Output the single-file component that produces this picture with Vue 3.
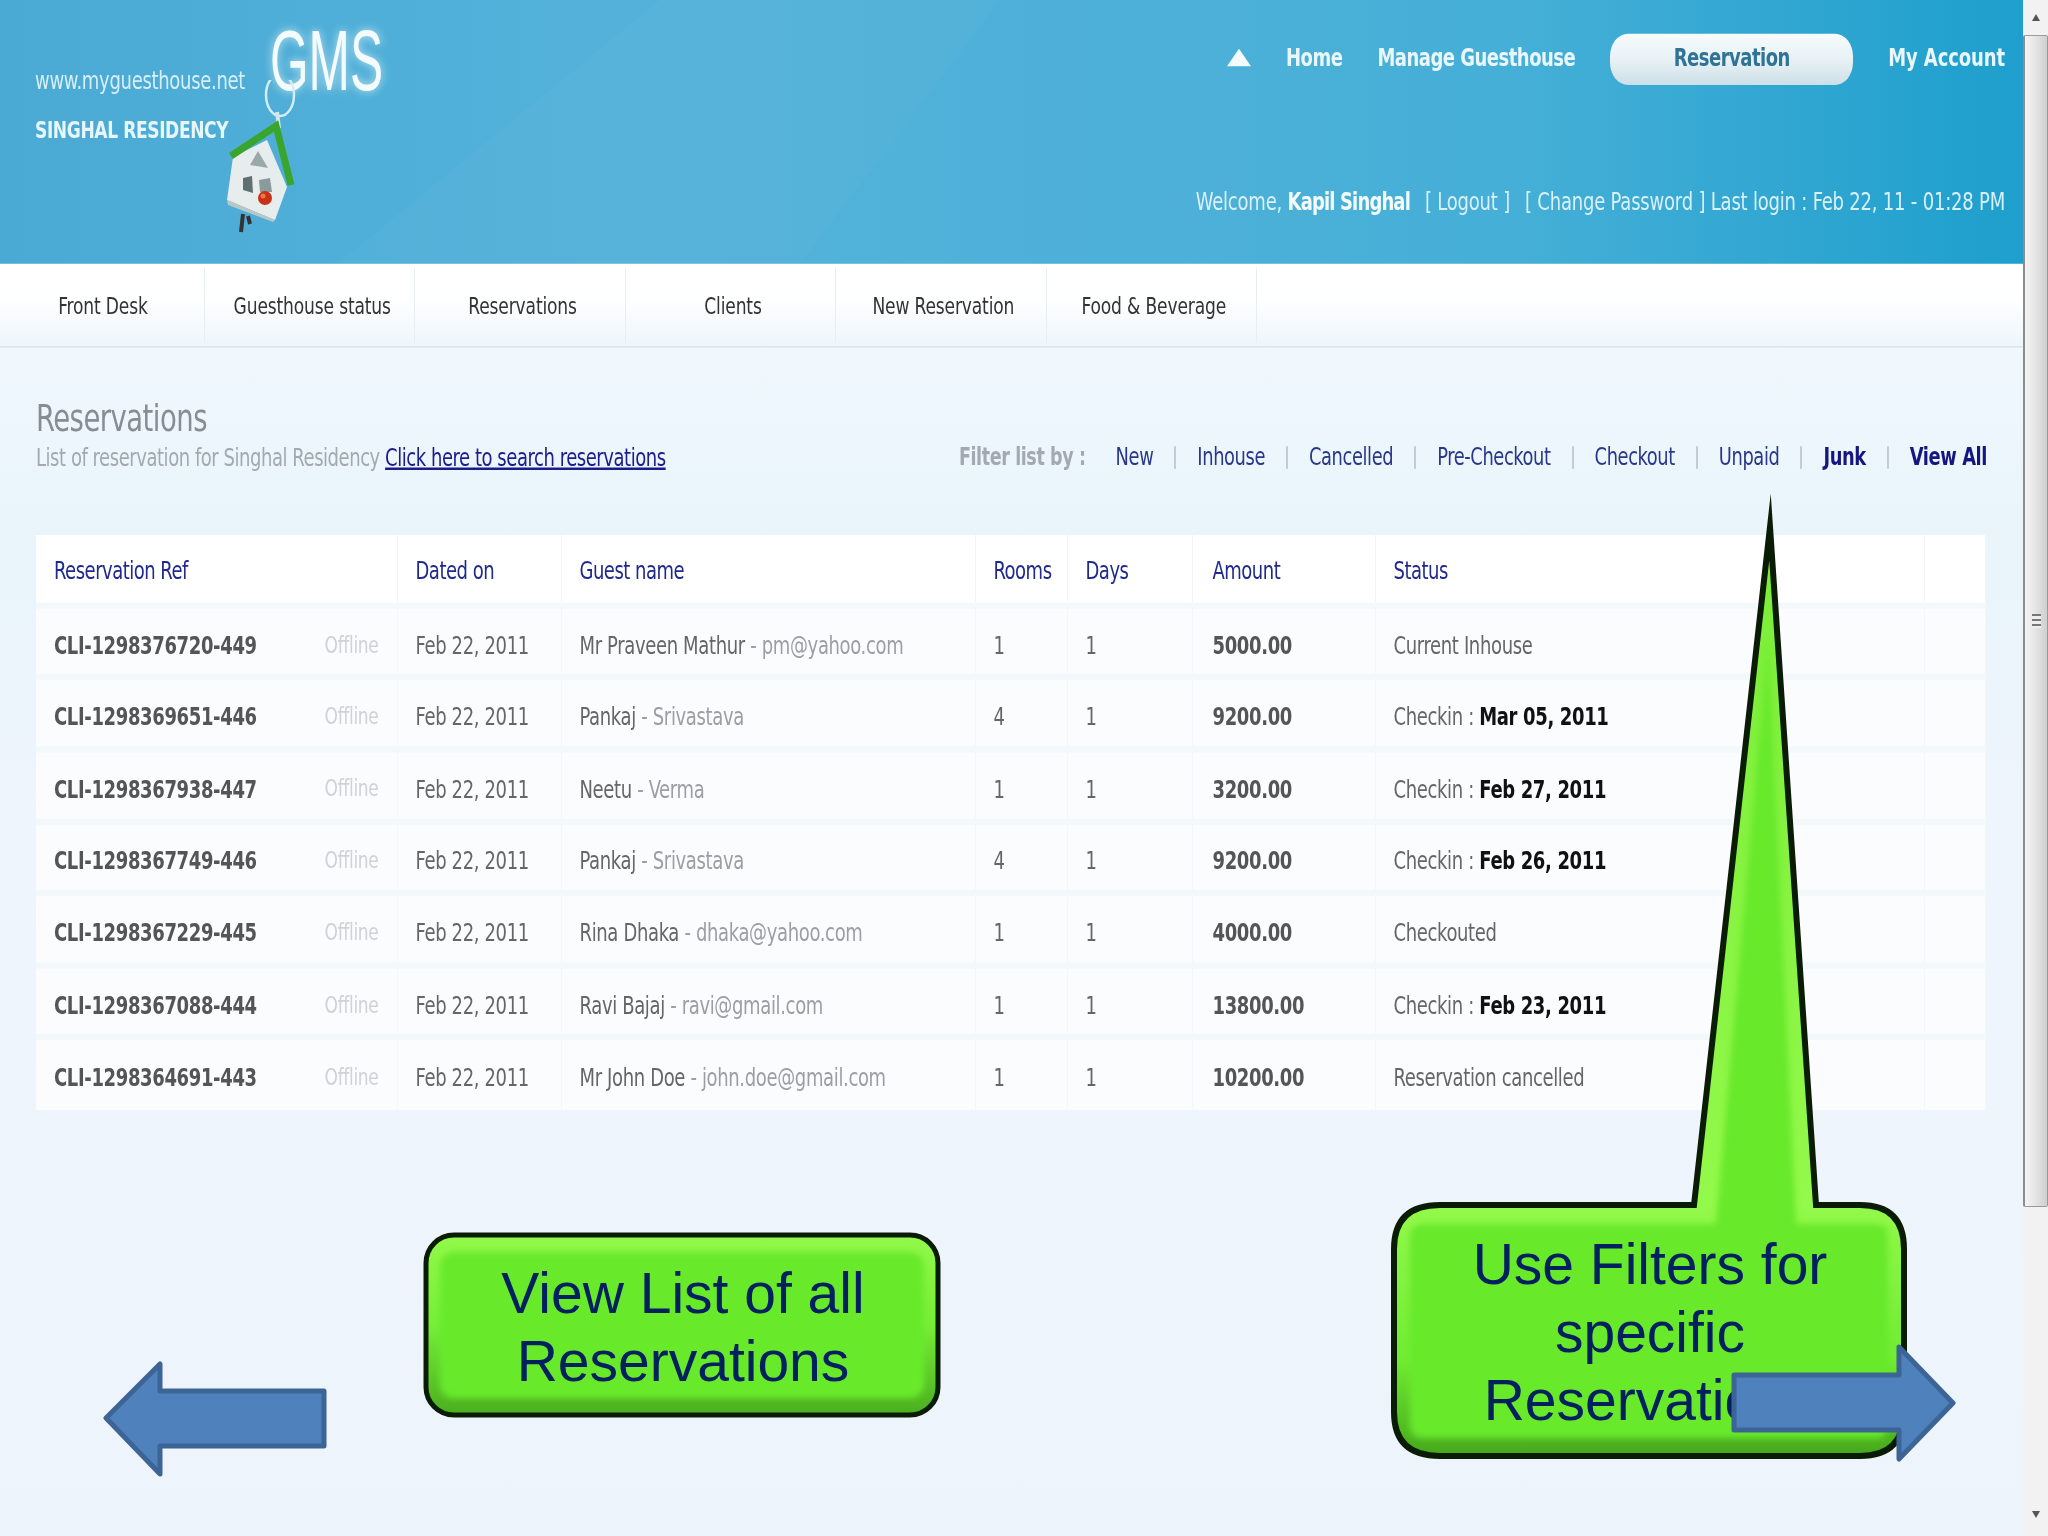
<script setup>
const navItems = ['Front Desk', 'Guesthouse status', 'Reservations', 'Clients', 'New Reservation', 'Food & Beverage']

const filters = [
  { label: 'New' },
  { label: 'Inhouse' },
  { label: 'Cancelled' },
  { label: 'Pre-Checkout' },
  { label: 'Checkout' },
  { label: 'Unpaid' },
  { label: 'Junk', bold: true },
  { label: 'View All', bold: true, last: true }
]

const rows = [
  { ref: 'CLI-1298376720-449', name: 'Mr Praveen Mathur', extra: 'pm@yahoo.com', rooms: 1, amount: '5000.00', status: 'Current Inhouse' },
  { ref: 'CLI-1298369651-446', name: 'Pankaj', extra: 'Srivastava', rooms: 4, amount: '9200.00', status: 'Checkin :', date: 'Mar 05, 2011' },
  { ref: 'CLI-1298367938-447', name: 'Neetu', extra: 'Verma', rooms: 1, amount: '3200.00', status: 'Checkin :', date: 'Feb 27, 2011' },
  { ref: 'CLI-1298367749-446', name: 'Pankaj', extra: 'Srivastava', rooms: 4, amount: '9200.00', status: 'Checkin :', date: 'Feb 26, 2011' },
  { ref: 'CLI-1298367229-445', name: 'Rina Dhaka', extra: 'dhaka@yahoo.com', rooms: 1, amount: '4000.00', status: 'Checkouted' },
  { ref: 'CLI-1298367088-444', name: 'Ravi Bajaj', extra: 'ravi@gmail.com', rooms: 1, amount: '13800.00', status: 'Checkin :', date: 'Feb 23, 2011' },
  { ref: 'CLI-1298364691-443', name: 'Mr John Doe', extra: 'john.doe@gmail.com', rooms: 1, amount: '10200.00', status: 'Reservation cancelled' }
]
</script>

<template>
  <div class="window">
    <div class="viewport">
      <!-- the app screenshot sits stretched on the slide, so the whole screen is scaled in Y -->
      <div class="screen">
        <header class="top">
          <div class="swoosh"></div>
          <div class="brand">
            <div class="site">www.myguesthouse.net</div>
            <div class="hotel">SINGHAL RESIDENCY</div>
            <div class="gms">GMS</div>
            <svg class="keyring" viewBox="200 80 110 165" preserveAspectRatio="none">
              <ellipse cx="280" cy="95" rx="14" ry="21" fill="none" stroke="#d4edf5" stroke-width="2.5" />
              <path d="M277 112 L279 128" stroke="#d4e4ea" stroke-width="4" />
              <path d="M233 157 L267 140 L287 187 L275 220 L227 200 Z" fill="#e6edec" />
              <path d="M227 200 L275 220 L273 222 L228 205 Z" fill="#b9c8c6" />
              <path d="M258 151 L268 168 L250 165 Z" fill="#9aa8a8" />
              <path d="M243 178 L252 176 L253 193 L243 190 Z" fill="#5f6f72" />
              <path d="M259 180 L270 178 L272 192 L260 192 Z" fill="#8b9a9c" />
              <circle cx="265" cy="198" r="7" fill="#c9301a" />
              <circle cx="263" cy="196" r="2.5" fill="#f07a3a" />
              <path d="M231 156 L276 126 L291 185" fill="none" stroke="#3aa52c" stroke-width="7" />
              <path d="M243 214 L241 232 M248 216 L250 224" stroke="#333" stroke-width="4" />
            </svg>
          </div>
          <div class="account">
            <nav class="main-nav">
              <span class="nav-arrow"></span>
              <a>Home</a>
              <a>Manage Guesthouse</a>
              <a class="pill">Reservation</a>
              <a class="last-link">My Account</a>
            </nav>
            <div class="welcome">
              Welcome, <b>Kapil Singhal</b><span class="wgap"></span>[ Logout ]<span class="wgap"></span>[ Change Password ] Last login : Feb 22, 11 - 01:28 PM
            </div>
          </div>
        </header>

        <nav class="sub-nav">
          <a v-for="item in navItems" :key="item" class="sub-item">{{ item }}</a>
        </nav>

        <section class="content">
          <div class="heading">
            <div>
              <h1>Reservations</h1>
              <p class="lead">List of reservation for Singhal Residency <a>Click here to search reservations</a></p>
            </div>
            <div class="filters">
              <span class="filter-label">Filter list by :</span>
              <template v-for="f in filters" :key="f.label">
                <a :class="{ strong: f.bold }">{{ f.label }}</a>
                <i v-if="!f.last" class="bar"></i>
              </template>
            </div>
          </div>

          <table class="list">
            <colgroup>
              <col class="c-ref" /><col class="c-date" /><col class="c-name" /><col class="c-rooms" />
              <col class="c-days" /><col class="c-amount" /><col class="c-status" /><col class="c-end" />
            </colgroup>
            <thead>
              <tr>
                <th>Reservation Ref</th>
                <th>Dated on</th>
                <th>Guest name</th>
                <th>Rooms</th>
                <th>Days</th>
                <th>Amount</th>
                <th>Status</th>
                <th></th>
              </tr>
            </thead>
            <tbody>
              <tr v-for="r in rows" :key="r.ref">
                <td><div class="ref-cell"><b>{{ r.ref }}</b><span class="offline">Offline</span></div></td>
                <td>Feb 22, 2011</td>
                <td>{{ r.name }} <span class="extra">- {{ r.extra }}</span></td>
                <td>{{ r.rooms }}</td>
                <td>1</td>
                <td><b>{{ r.amount }}</b></td>
                <td>{{ r.status }} <b v-if="r.date" class="when">{{ r.date }}</b></td>
                <td></td>
              </tr>
            </tbody>
          </table>
        </section>
      </div>

      <!-- slide annotations on top of the screenshot -->
      <div class="callout callout-list">
        <svg class="shape" viewBox="420 1228 526 196">
          <defs>
            <linearGradient id="g1" x1="0" y1="0" x2="0" y2="1">
              <stop offset="0" stop-color="#93f94a" />
              <stop offset="0.5" stop-color="#76ee38" />
              <stop offset="1" stop-color="#4aae1e" />
            </linearGradient>
            <filter id="soft1"><feGaussianBlur stdDeviation="3" /></filter>
          </defs>
          <rect x="426" y="1235" width="512" height="180" rx="28" fill="url(#g1)" stroke="#0a1c06" stroke-width="5" />
          <rect x="440" y="1252" width="484" height="146" rx="14" fill="#68ea2b" filter="url(#soft1)" />
        </svg>
        <div class="say say-list">View List of all<br />Reservations</div>
      </div>

      <div class="callout callout-filter">
        <svg class="shape" viewBox="1380 480 540 990">
          <defs>
            <linearGradient id="g2" gradientUnits="userSpaceOnUse" x1="0" y1="480" x2="0" y2="1458">
              <stop offset="0" stop-color="#78ec36" />
              <stop offset="0.74" stop-color="#93f94a" />
              <stop offset="0.9" stop-color="#70ec32" />
              <stop offset="1" stop-color="#45a61c" />
            </linearGradient>
            <filter id="soft2"><feGaussianBlur stdDeviation="3" /></filter>
          </defs>
          <path
            d="M1440 1205 H1694 L1770 527 L1816 1205 H1860 Q1904 1205 1904 1249 V1412 Q1904 1456 1860 1456 H1440 Q1394 1456 1394 1412 V1249 Q1394 1205 1440 1205 Z"
            fill="url(#g2)" stroke="#0a1c06" stroke-width="6" stroke-miterlimit="30"
          />
          <path
            d="M1425 1224 H1716 L1768 640 L1796 1224 H1875 Q1888 1224 1888 1237 V1425 Q1888 1438 1875 1438 H1425 Q1410 1438 1410 1425 V1237 Q1410 1224 1425 1224 Z"
            fill="#67e92b" filter="url(#soft2)"
          />
        </svg>
        <div class="say say-filter">Use Filters for<br />specific<br />Reservations</div>
      </div>

      <svg class="arrow arrow-prev" viewBox="100 1358 230 122">
        <path d="M106 1418 L160 1364 V1391 H324 V1446 H160 V1474 Z" />
      </svg>
      <svg class="arrow arrow-next" viewBox="1728 1339 232 128">
        <path d="M1734 1375 H1899 V1347 L1953 1403 L1899 1459 V1430 H1734 Z" />
      </svg>
    </div>

    <aside class="scrollbar">
      <span class="sb-up"></span>
      <div class="thumb"><span class="grip"></span></div>
      <span class="sb-down"></span>
    </aside>
  </div>
</template>

<style>
html,
body {
  margin: 0;
  background: #eef4fc;
}
</style>

<style scoped>
.window {
  display: flex;
  width: 2048px;
  height: 1536px;
  overflow: hidden;
  background: #eef4fc;
  font-family: "DejaVu Sans", "Liberation Sans", sans-serif;
  font-stretch: condensed;
}
.viewport {
  position: relative;
  width: 2023px;
  height: 1536px;
  flex: none;
}
.screen {
  width: 2023px;
  height: 1228.8px;
  transform: scaleY(1.25);
  transform-origin: 0 0;
  filter: blur(0.5px);
  background: linear-gradient(180deg, #f0f8fd 270px, #e9f5fb 420px, #eff5fc 700px, #eef4fc 100%);
}

/* top banner */
.top {
  position: relative;
  display: flex;
  justify-content: space-between;
  height: 211.2px;
  background: linear-gradient(90deg, #4aaad4 0, #4fafd8 18%, #54b2da 30%, #4cb0d8 60%, #45afd7 75%, #1e9fcd 100%);
  overflow: hidden;
}
.swoosh {
  position: absolute;
  inset: 0;
  background: rgba(255, 255, 255, 0.025);
  clip-path: polygon(337px 100%, 660px 0, 1000px 0, 800px 100%);
}
.brand {
  position: relative;
  padding: 52px 0 0 35px;
}
.site {
  height: 24px;
  line-height: 24px;
  font-size: 20px;
  color: #d8eef6;
  letter-spacing: -0.3px;
}
.hotel {
  margin-top: 15px;
  height: 24px;
  line-height: 24px;
  font-size: 19px;
  font-weight: bold;
  color: #e6f6fa;
  letter-spacing: -0.4px;
}
.gms {
  position: absolute;
  left: 270px;
  top: 14px;
  font-size: 68px;
  line-height: 1;
  font-family: "Liberation Sans", sans-serif;
  color: #f4fbfd;
  transform: scaleX(0.73);
  transform-origin: 0 0;
  text-shadow: 0 0 10px rgba(255, 255, 255, 0.7);
}
.keyring {
  position: absolute;
  left: 200px;
  top: 64px;
  width: 110px;
  height: 132px;
}
.account {
  position: relative;
  display: flex;
  flex-direction: column;
  align-items: flex-end;
  padding: 25.6px 18px 0 0;
}
.main-nav {
  display: flex;
  align-items: center;
  gap: 35px;
  height: 40px;
  font-size: 20px;
  font-weight: bold;
  color: #e9f7fb;
  letter-spacing: -0.5px;
}
.last-link {
  letter-spacing: -0.1px;
}
.nav-arrow {
  width: 0;
  height: 0;
  border-left: 12px solid transparent;
  border-right: 12px solid transparent;
  border-bottom: 14px solid #f4fbfd;
}
.pill {
  display: flex;
  align-items: center;
  justify-content: center;
  width: 243px;
  height: 41px;
  margin-top: 3px;
  padding-bottom: 3px;
  box-sizing: border-box;
  border-radius: 18px;
  background: linear-gradient(180deg, #f7fbfc, #e6f0f4 55%, #cddfe7);
  color: #2f7396;
}
.welcome {
  margin-top: 83px;
  height: 24px;
  line-height: 24px;
  font-size: 20px;
  color: #d9f0f7;
  letter-spacing: -0.2px;
  white-space: nowrap;
}
.welcome b {
  color: #f4fbfd;
  letter-spacing: -0.85px;
}
.wgap {
  display: inline-block;
  width: 15px;
}

/* sub navigation */
.sub-nav {
  display: flex;
  height: 66.4px;
  background: linear-gradient(180deg, #ffffff 40%, #eef6fb);
  border-bottom: 1px solid #d5e0e6;
  box-sizing: border-box;
}
.sub-item {
  display: flex;
  align-items: center;
  justify-content: center;
  width: 210.4px;
  height: 60px;
  margin-top: 3px;
  padding-left: 5px;
  border-right: 1px solid #e8eef2;
  box-sizing: border-box;
  font-size: 19px;
  color: #333;
  letter-spacing: -0.15px;
}
.sub-item:first-child {
  width: 205px;
  padding-left: 2px;
}

/* page body */
.content {
  padding: 0 38px 0 36px;
}
.heading {
  display: flex;
  justify-content: space-between;
  align-items: flex-end;
  height: 115.2px;
  padding-bottom: 15px;
  box-sizing: border-box;
}
h1 {
  margin: 0 0 2px;
  font-size: 30.5px;
  line-height: 35px;
  font-weight: normal;
  color: #868e94;
  letter-spacing: -0.5px;
}
.lead {
  margin: 0;
  font-size: 20px;
  line-height: 24px;
  color: #a2aab0;
  letter-spacing: -0.45px;
}
.lead a {
  color: #1c1c8c;
  text-decoration: underline;
}
.filters {
  display: flex;
  align-items: center;
  height: 24px;
  font-size: 19.85px;
  color: #2a3788;
  letter-spacing: -0.4px;
  margin-right: -2px;
}
.filter-label {
  margin-right: 30px;
  font-size: 19.5px;
  font-weight: bold;
  color: #a2aab0;
}
.strong {
  font-weight: bold;
  color: #16167f;
}
.bar {
  width: 2px;
  height: 18px;
  margin: 0 21px;
  background: #c4ccd2;
}

/* table */
.list {
  display: table;
  table-layout: fixed;
  border-collapse: collapse;
  width: 1949px;
  margin-top: 35.6px;
  font-size: 20px;
  color: #666;
  letter-spacing: -0.35px;
}
.c-ref { width: 361px; }
.c-date { width: 164px; }
.c-name { width: 414px; }
.c-rooms { width: 92px; }
.c-days { width: 125px; }
.c-amount { width: 183px; }
.c-status { width: 549px; }
.c-end { width: 61px; }
th {
  height: 56px;
  padding: 2px 0 0 18px;
  box-sizing: border-box;
  background: #fff;
  border-right: 1px solid #f1f5f8;
  border-bottom: 2px solid #e4eaee;
  text-align: left;
  font-weight: normal;
  letter-spacing: -0.5px;
  color: #1f2a8c;
}
td {
  height: 57.6px;
  padding: 5px 0 0 18px;
  box-sizing: border-box;
  background: #fbfcfe;
  border-right: 1px solid #f2f7fa;
  border-top: 5px solid #f3f8fb;
  white-space: nowrap;
}
td:nth-child(6),
th:nth-child(6) {
  padding-left: 20px;
}
td b {
  color: #555;
}
.ref-cell {
  display: flex;
  justify-content: space-between;
  padding-right: 18px;
}
.offline {
  font-size: 19px;
  color: #cfd3d6;
}
.extra {
  color: #9a9fa3;
}
td b.when {
  color: #111;
}

/* slide shapes */
.callout {
  position: absolute;
}
.callout-list {
  left: 420px;
  top: 1228px;
  width: 526px;
  height: 196px;
}
.callout-filter {
  left: 1380px;
  top: 480px;
  width: 540px;
  height: 990px;
}
.shape {
  position: absolute;
  inset: 0;
  width: 100%;
  height: 100%;
}
.say {
  position: absolute;
  left: 0;
  right: 0;
  text-align: center;
  font-family: "Liberation Sans", Arial, sans-serif;
  font-stretch: normal;
  font-size: 57px;
  line-height: 68px;
  color: #002060;
}
.say-list {
  top: 31px;
}
.say-filter {
  top: 750px;
  white-space: nowrap;
}
.arrow {
  position: absolute;
}
.arrow path {
  fill: #4f81bd;
  stroke: #3c6596;
  stroke-width: 5;
  stroke-linejoin: round;
}
.arrow-prev {
  left: 100px;
  top: 1358px;
  width: 230px;
  height: 122px;
}
.arrow-next {
  left: 1728px;
  top: 1339px;
  width: 232px;
  height: 128px;
}

/* browser scrollbar */
.scrollbar {
  display: flex;
  flex-direction: column;
  align-items: stretch;
  flex: none;
  width: 25px;
  height: 1536px;
  box-sizing: border-box;
  background: #f2f2f2;
}
.sb-up,
.sb-down {
  display: block;
  flex: none;
  width: 0;
  height: 0;
  align-self: center;
  border-left: 4px solid transparent;
  border-right: 4px solid transparent;
}
.sb-up {
  margin: 14px 0 14px;
  border-bottom: 7px solid #555;
}
.sb-down {
  margin: 304px 0 0;
  border-top: 7px solid #555;
}
.thumb {
  display: flex;
  align-items: center;
  justify-content: center;
  height: 1172px;
  flex: none;
  box-sizing: border-box;
  border: 1px solid #9a9a9a;
  border-left: 2px solid #8c8c8c;
  border-radius: 2px;
  background: linear-gradient(90deg, #f4f4f4, #e8e8e8 40%, #cfcfcf);
}
.grip {
  width: 9px;
  height: 14px;
  background: repeating-linear-gradient(180deg, #777 0 2px, #eee 2px 5px);
}
</style>
